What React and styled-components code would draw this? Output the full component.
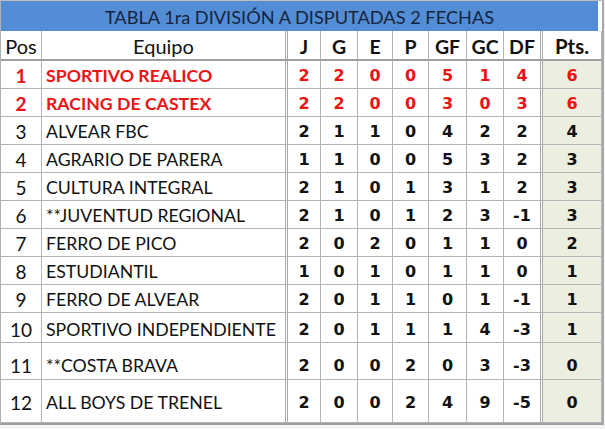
import React from "react";
import styled, { createGlobalStyle } from "styled-components";

const Global = createGlobalStyle`
  html, body { margin: 0; padding: 0; background: #f4f4f4; }
  * { box-sizing: border-box; }
`;

const COLS = "41px 246px 33px 37px 35px 36px 38px 37px 39px 59px";

const Sheet = styled.div`
  width: 604px;
  background: #ffffff;
  border-top: 1px solid #bdbdbd;
  border-left: 1px solid #b0b0b0;
  border-right: 2px solid #a8a8a8;
  font-family: Lato, "Liberation Sans", sans-serif;
`;

const Title = styled.div`
  height: 30px;
  width: 597px;
  background: #538dd5;
  color: #16243f;
  font-size: 18.2px;
  display: flex;
  align-items: center;
  justify-content: center;
  padding-top: 1px;
`;

const Grid = styled.div`
  display: flex;
  flex-direction: column;
  border-bottom: 2px solid #9e9e9e;
`;

const Row = styled.div`
  display: grid;
  grid-template-columns: ${COLS};
  height: ${(p) => p.$h}px;
  border-bottom: ${(p) => (p.$head ? "2px solid #a0a0a0" : "1px solid #b4b4b4")};
  & > div {
    padding-top: ${(p) => p.$shift ?? 2}px;
  }
`;

const Cell = styled.div`
  display: flex;
  align-items: center;
  justify-content: ${(p) => (p.$left ? "flex-start" : "center")};
  padding-left: ${(p) => (p.$left ? "4px" : "0")};
  border-right: ${(p) => (p.$double ? "3px double #a8a8a8" : "1px solid #b4b4b4")};
  background: ${(p) => (p.$pts ? "#eceee0" : "#ffffff")};
  color: ${(p) => (p.$red ? "#ea1414" : "#111111")};
  white-space: nowrap;
  overflow: hidden;
`;

const Text = styled.span`
  font-family: Lato, "Liberation Sans", sans-serif;
  font-size: ${(p) => (p.$pos ? "19px" : "17.7px")};
  font-weight: ${(p) => (p.$bold ? 700 : 400)};
`;

const Num = styled.span`
  font-family: "DejaVu Sans", Verdana, sans-serif;
  font-size: 16px;
  font-weight: 700;
`;

const HeadText = styled.span`
  font-family: Lato, "Liberation Sans", sans-serif;
  font-size: ${(p) => (p.$big ? "20.5px" : p.$bold ? "19.5px" : "20px")};
  font-weight: ${(p) => (p.$bold ? 700 : 400)};
`;

const data = [
  [1, "SPORTIVO REALICO", 2, 2, 0, 0, 5, 1, 4, 6, true],
  [2, "RACING DE CASTEX", 2, 2, 0, 0, 3, 0, 3, 6, true],
  [3, "ALVEAR FBC", 2, 1, 1, 0, 4, 2, 2, 4],
  [4, "AGRARIO DE PARERA", 1, 1, 0, 0, 5, 3, 2, 3],
  [5, "CULTURA INTEGRAL", 2, 1, 0, 1, 3, 1, 2, 3],
  [6, "**JUVENTUD REGIONAL", 2, 1, 0, 1, 2, 3, -1, 3],
  [7, "FERRO DE PICO", 2, 0, 2, 0, 1, 1, 0, 2],
  [8, "ESTUDIANTIL", 1, 0, 1, 0, 1, 1, 0, 1],
  [9, "FERRO DE ALVEAR", 2, 0, 1, 1, 0, 1, -1, 1],
  [10, "SPORTIVO INDEPENDIENTE", 2, 0, 1, 1, 1, 4, -3, 1],
  [11, "**COSTA BRAVA", 2, 0, 0, 2, 0, 3, -3, 0],
  [12, "ALL BOYS DE TRENEL", 2, 0, 0, 2, 4, 9, -5, 0],
];

const heights = [28, 28, 28, 28, 28, 28, 28, 28, 28, 30, 37, 43];
const shifts = [2, 2, 2, 2, 2, 2, 2, 2, 2, 3, 8, 3];

const heads = ["J", "G", "E", "P", "GF", "GC", "DF"];

export default function App() {
  return (
    <>
      <Global />
      <Sheet>
        <Title>TABLA 1ra DIVISIÓN A DISPUTADAS 2 FECHAS</Title>
        <Grid>
          <Row $h={30} $head>
            <Cell><HeadText>Pos</HeadText></Cell>
            <Cell $double><HeadText>Equipo</HeadText></Cell>
            {heads.map((h) => (
              <Cell key={h} $double={h === "DF"}>
                <HeadText $bold>{h}</HeadText>
              </Cell>
            ))}
            <Cell><HeadText $bold $big>Pts.</HeadText></Cell>
          </Row>
          {data.map((r, i) => {
            const red = !!r[10];
            const stats = r.slice(2, 9);
            return (
              <Row key={r[0]} $h={heights[i]} $shift={shifts[i]}>
                <Cell $red={red}><Text $pos $bold={red}>{r[0]}</Text></Cell>
                <Cell $left $double $red={red}><Text $bold={red}>{r[1]}</Text></Cell>
                {stats.map((v, j) => (
                  <Cell key={j} $red={red} $double={j === 6}>
                    <Num>{v}</Num>
                  </Cell>
                ))}
                <Cell $pts $red={red}><Num>{r[9]}</Num></Cell>
              </Row>
            );
          })}
        </Grid>
      </Sheet>
    </>
  );
}
